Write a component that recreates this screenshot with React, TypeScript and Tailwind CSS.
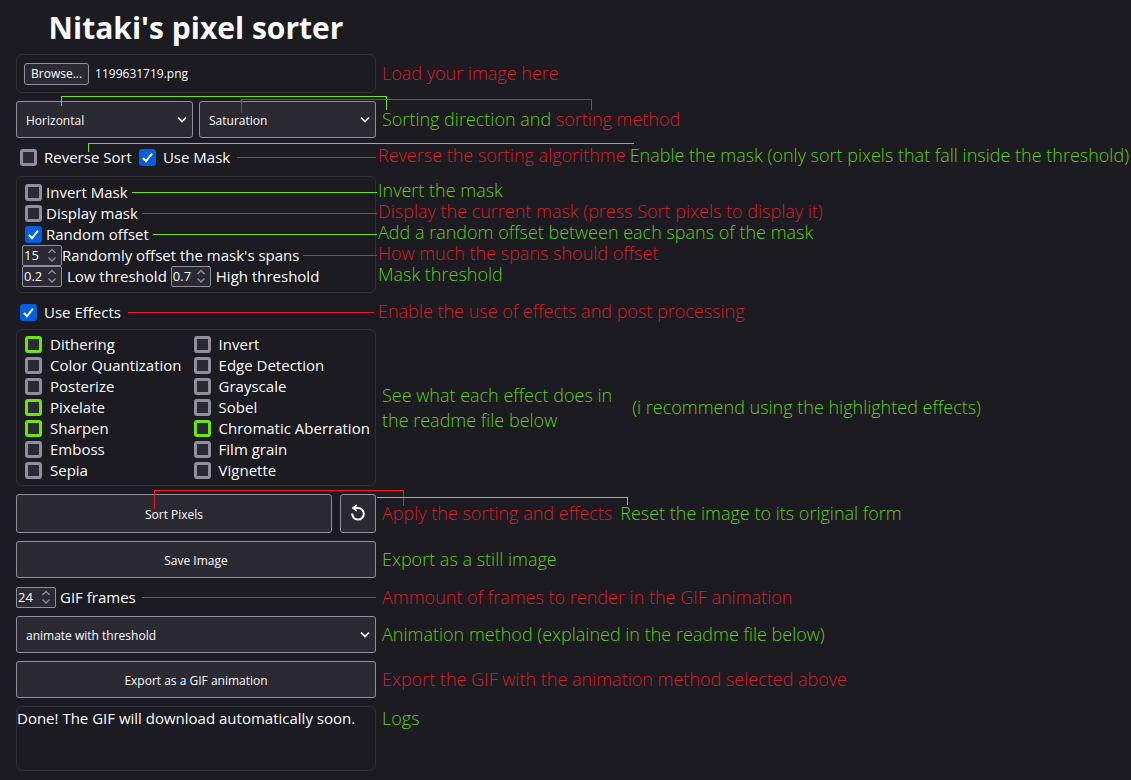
import type { ReactNode } from 'react';

type Tone = 'red' | 'green';

const TEXT: Record<Tone, string> = { red: 'text-[#d81d26]', green: 'text-[#5fce0c]' };
const LINE: Record<Tone, string> = { red: 'bg-[#ed1c24]', green: 'bg-[#6be605]' };
const STROKE: Record<Tone, string> = { red: 'stroke-[#ed1c24]', green: 'stroke-[#6be605]' };

function Note({ tone, children }: { tone: Tone; children: ReactNode }) {
  return <span className={`whitespace-nowrap text-[18px] leading-[25px] font-light ${TEXT[tone]}`}>{children}</span>;
}

function Row({ children, note, align = 'items-center', gap = 'gap-1.5' }: { children: ReactNode; note?: ReactNode; align?: string; gap?: string }) {
  return (
    <div className={`relative flex ${align} ${gap}`}>
      <div className="w-90 shrink-0">{children}</div>
      {note}
    </div>
  );
}

function Lead({ tone, className = '' }: { tone: Tone; className?: string }) {
  return <span aria-hidden="true" className={`h-px flex-1 ${LINE[tone]} ${className}`} />;
}

function Bracket({ tone, d, className }: { tone: Tone; d: string; className: string }) {
  return (
    <svg aria-hidden="true" className={`pointer-events-none absolute overflow-visible ${STROKE[tone]} ${className}`} fill="none" shapeRendering="crispEdges">
      <path d={d} />
    </svg>
  );
}

function Check({ label, checked, highlight, gap = 'gap-2' }: { label: string; checked?: boolean; highlight?: boolean; gap?: string }) {
  const border = highlight ? 'border-[#6be605]' : 'border-[#8f8f9d]';
  return (
    <label className={`flex items-center whitespace-nowrap ${gap}`}>
      <span className="relative flex size-[17px] shrink-0">
        <input
          type="checkbox"
          defaultChecked={checked}
          className={`peer size-full appearance-none rounded-[3px] border-[3px] bg-[#2b2a33] checked:border-[#0060df] checked:bg-[#0060df] ${border}`}
        />
        <svg viewBox="0 0 17 17" className="pointer-events-none absolute inset-0 hidden fill-none stroke-[#fbfbfe] stroke-2 peer-checked:block">
          <path d="M4 9l3 3.2L13 4.6" />
        </svg>
      </span>
      {label}
    </label>
  );
}

function NumberField({ label, value, step, gap }: { label: string; value: string; step?: string; gap: string }) {
  return (
    <label className={`flex items-center whitespace-nowrap ${gap}`}>
      <span className="relative flex h-[21px] w-10 shrink-0">
        <input
          type="number"
          step={step}
          defaultValue={value}
          className="w-full appearance-none rounded-xs border border-[#8f8f9d] bg-[#2b2a33] pt-px pl-px text-[13px] [-moz-appearance:textfield] [&::-webkit-inner-spin-button]:appearance-none"
        />
        <svg viewBox="0 0 10 14" className="pointer-events-none absolute top-[3px] right-[5px] h-3.5 w-2.5 fill-none stroke-[#8f8f9d] stroke-[1.4]">
          <path d="M1.5 5L5 1.5L8.5 5M1.5 9.5L5 13L8.5 9.5" />
        </svg>
      </span>
      {label}
    </label>
  );
}

function Select({ label, options }: { label: string; options: string[] }) {
  return (
    <span className="relative flex flex-1">
      <select aria-label={label} className="h-[37px] w-full appearance-none rounded-[3px] border border-[#8f8f9d] bg-[#2b2a33] px-[9px] pt-0.5 text-[12px]">
        {options.map((option) => (
          <option key={option}>{option}</option>
        ))}
      </select>
      <svg viewBox="0 0 10 8" className="pointer-events-none absolute top-[15px] right-1.5 h-2 w-2.5 fill-none stroke-[#fbfbfe] stroke-[1.6]">
        <path d="M1 1.5L5 5.5L9 1.5" />
      </svg>
    </span>
  );
}

const BUTTON = 'flex items-center justify-center rounded-[3px] border border-[#8f8f9d] bg-[#2b2a33] pt-0.5 text-[12px]';
const PANEL = 'rounded-md border border-[#303036]';

const EFFECTS: [string, boolean][][] = [
  [['Dithering', true], ['Color Quantization', false], ['Posterize', false], ['Pixelate', true], ['Sharpen', true], ['Emboss', false], ['Sepia', false]],
  [['Invert', false], ['Edge Detection', false], ['Grayscale', false], ['Sobel', false], ['Chromatic Aberration', true], ['Film grain', false], ['Vignette', false]],
];

export default function App() {
  return (
    <main className="min-h-screen overflow-x-hidden bg-[#1c1b22] px-4 pb-2 font-['Open_Sans','Noto_Sans',sans-serif] text-[15px] text-[#fbfbfe]">
      <h1 className="w-90 pt-2 pb-1.5 text-center text-[30px] leading-10 font-bold">Nitaki's pixel sorter</h1>

      <div className="flex flex-col gap-2">
        <Row note={<Note tone="red">Load your image here</Note>}>
          <div className={`flex h-[39px] items-center px-[7px] text-[12px] ${PANEL}`}>
            <label className="flex items-center gap-1.5">
              <input type="file" accept="image/*" className="sr-only" />
              <span className="rounded-[3px] border border-[#8f8f9d] bg-[#2b2a33] px-1.5 leading-5">Browse...</span>
              <span>1199631719.png</span>
            </label>
          </div>
        </Row>

        <Row
          note={
            <>
              <Note tone="green">
                Sorting direction and <span className={TEXT.red}>sorting method</span>
              </Note>
              <Bracket tone="green" className="-top-[5px] left-[45px] h-4 w-[326px]" d="M.5 10V.5H325.5V14" />
              <Bracket tone="red" className="-top-0.5 left-[225px] h-4 w-[351px]" d="M.5 14V.5H350.5V11" />
            </>
          }
        >
          <div className="flex gap-1.5">
            <Select label="Sorting direction" options={['Horizontal', 'Vertical']} />
            <Select label="Sorting method" options={['Saturation', 'Hue', 'Brightness']} />
          </div>
        </Row>

        <Row
          gap="gap-0.5"
          align="items-end"
          note={
            <>
              <span className="-my-3 flex gap-1 pb-3">
                <Note tone="red">Reverse the sorting algorithme</Note>
                <Note tone="green">Enable the mask (only sort pixels that fall inside the threshold)</Note>
              </span>
              <Bracket tone="green" className="-top-[3px] left-[72px] h-3 w-[547px]" d="M.5 9V.5H546" />
            </>
          }
        >
          <div className="flex h-[22px] items-center gap-[7px] pl-1">
            <Check label="Reverse Sort" gap="gap-[7px]" />
            <Check label="Use Mask" checked gap="gap-[7px]" />
            <Lead tone="red" />
          </div>
        </Row>

        <Row
          gap="gap-0.5"
          note={
            <div className="flex flex-col pb-1 *:leading-[21px]">
              <Note tone="green">Invert the mask</Note>
              <Note tone="red">Display the current mask (press Sort pixels to display it)</Note>
              <Note tone="green">Add a random offset between each spans of the mask</Note>
              <Note tone="red">How much the spans should offset</Note>
              <Note tone="green">Mask threshold</Note>
            </div>
          }
        >
          <div className={`py-[5px] *:flex *:h-[21px] *:items-center *:gap-1 ${PANEL}`}>
            <div className="pl-2">
              <Check label="Invert Mask" gap="gap-1" />
              <Lead tone="green" className="-mr-0.5" />
            </div>
            <div className="pl-2">
              <Check label="Display mask" gap="gap-1" />
              <Lead tone="red" className="-mr-0.5" />
            </div>
            <div className="pl-2">
              <Check label="Random offset" checked gap="gap-1" />
              <Lead tone="green" className="-mr-0.5" />
            </div>
            <div className="pl-[5px]">
              <NumberField label="Randomly offset the mask's spans" value="15" gap="gap-0" />
              <Lead tone="red" className="-mr-0.5" />
            </div>
            <div className="pl-[5px]">
              <NumberField label="Low threshold" value="0.2" step="0.05" gap="gap-[5px]" />
              <NumberField label="High threshold" value="0.7" step="0.05" gap="gap-[5px]" />
            </div>
          </div>
        </Row>

        <Row gap="gap-0.5" note={<span className="-my-1 flex"><Note tone="red">Enable the use of effects and post processing</Note></span>}>
          <div className="flex h-5 items-center gap-[7px] pt-0.5 pl-1">
            <Check label="Use Effects" checked gap="gap-[7px]" />
            <Lead tone="red" className="mr-0.5" />
          </div>
        </Row>

        <Row
          note={
            <div className="flex items-center gap-5">
              <p className="flex flex-col">
                <Note tone="green">See what each effect does in</Note>
                <Note tone="green">the readme file below</Note>
              </p>
              <Note tone="green">(i recommend using the highlighted effects)</Note>
            </div>
          }
        >
          <div className={`flex gap-3 py-1 pl-2 ${PANEL}`}>
            {EFFECTS.map((column, index) => (
              <div key={index} className="flex flex-col *:h-[21px]">
                {column.map(([name, highlight]) => (
                  <Check key={name} label={name} highlight={highlight} />
                ))}
              </div>
            ))}
          </div>
        </Row>

        <Row
          note={
            <>
              <span className="flex gap-2">
                <Note tone="red">Apply the sorting and effects</Note>
                <Note tone="green">Reset the image to its original form</Note>
              </span>
              <Bracket tone="red" className="-top-1 left-[138px] h-5 w-[250px]" d="M.5 19V.5H249.5V16" />
              <Bracket tone="green" className="top-[3px] left-[361px] h-2 w-[251px]" d="M0 .5H250.5V8" />
            </>
          }
        >
          <div className="flex h-[39px] gap-2">
            <button type="button" className={`flex-1 ${BUTTON}`}>Sort Pixels</button>
            <button type="button" aria-label="Reset" className={`w-9 pb-1 ${BUTTON}`}>
              <svg viewBox="0 0 16 18" className="h-[18px] w-4 fill-none stroke-[#fbfbfe]">
                <path className="stroke-2" d="M2.2 9.5A5.8 5.8 0 1 0 8 4H5" />
                <path className="fill-[#fbfbfe] stroke-1" d="M6.4 .9L2.2 4L6.4 7.1L5.4 4Z" />
              </svg>
            </button>
          </div>
        </Row>

        <Row note={<Note tone="green">Export as a still image</Note>}>
          <button type="button" className={`h-[37px] w-full ${BUTTON}`}>Save Image</button>
        </Row>

        <Row note={<span className="-my-1 flex"><Note tone="red">Ammount of frames to render in the GIF animation</Note></span>}>
          <div className="flex h-[22px] items-center gap-1.5">
            <NumberField label="GIF frames" value="24" gap="gap-1" />
            <Lead tone="red" />
          </div>
        </Row>

        <Row note={<Note tone="green">Animation method (explained in the readme file below)</Note>}>
          <div className="flex">
            <Select label="Animation method" options={['animate with threshold', 'animate with offset']} />
          </div>
        </Row>

        <Row note={<Note tone="red">Export the GIF with the animation method selected above</Note>}>
          <button type="button" className={`h-[37px] w-full ${BUTTON}`}>Export as a GIF animation</button>
        </Row>

        <Row align="items-start" note={<Note tone="green">Logs</Note>}>
          <output className={`block h-[65px] leading-[22px] ${PANEL}`}>Done! The GIF will download automatically soon.</output>
        </Row>
      </div>
    </main>
  );
}
